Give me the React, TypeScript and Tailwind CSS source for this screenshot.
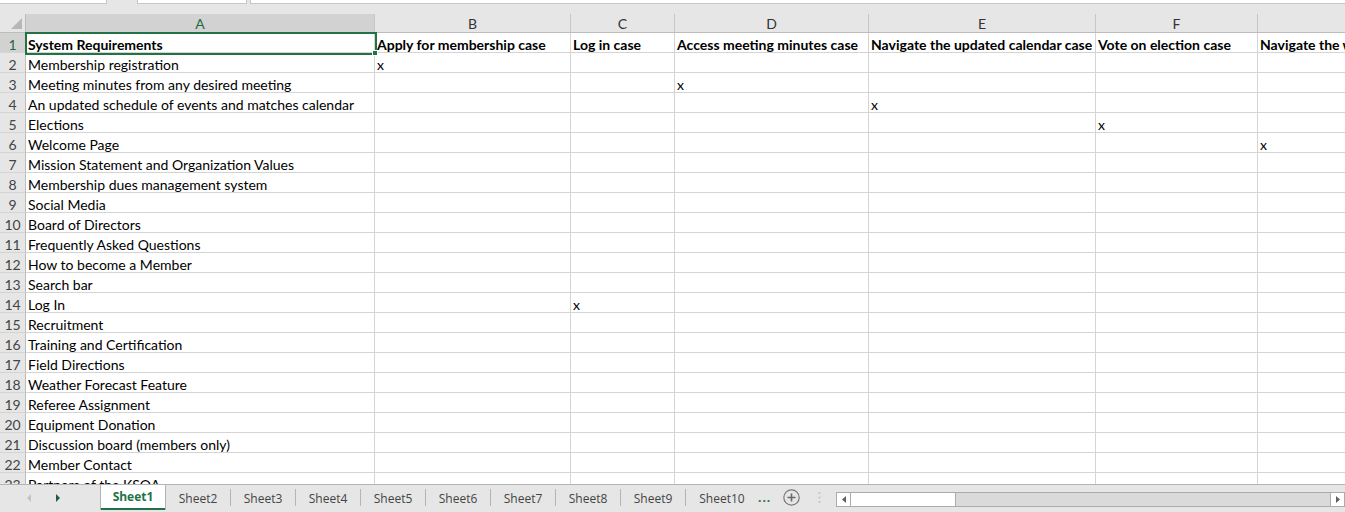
import React from "react";

const cols = [
  { l: "A", w: 349 },
  { l: "B", w: 196 },
  { l: "C", w: 104 },
  { l: "D", w: 194 },
  { l: "E", w: 227 },
  { l: "F", w: 162 },
  { l: "G", w: 120 },
];

const header = [
  "System Requirements",
  "Apply for membership case",
  "Log in case",
  "Access meeting minutes case",
  "Navigate the updated calendar case",
  "Vote on election case",
  "Navigate the welcome page case",
];

const requirements = [
  "Membership registration",
  "Meeting minutes from any desired meeting",
  "An updated schedule of events and matches calendar",
  "Elections",
  "Welcome Page",
  "Mission Statement and Organization Values",
  "Membership dues management system",
  "Social Media",
  "Board of Directors",
  "Frequently Asked Questions",
  "How to become a Member",
  "Search bar",
  "Log In",
  "Recruitment",
  "Training and Certification",
  "Field Directions",
  "Weather Forecast Feature",
  "Referee Assignment",
  "Equipment Donation",
  "Discussion board (members only)",
  "Member Contact",
  "Partners of the KSOA",
];

// which column (index) holds the "x" for a row number
const marks: Record<number, number> = { 2: 1, 3: 3, 4: 4, 5: 5, 6: 6, 14: 2 };

const sheets = ["Sheet2", "Sheet3", "Sheet4", "Sheet5", "Sheet6", "Sheet7", "Sheet8", "Sheet9"];

function Row({ n, cells, bold }: { n: number; cells: string[]; bold?: boolean }) {
  return (
    <div className="flex h-[20px] shrink-0">
      <div
        className={`w-[26px] shrink-0 border-r border-b border-r-[#bcbcbc] border-b-[#d4d4d4] flex items-center justify-center pt-[3px] text-[14px] ${
          n === 1 ? "bg-[#d2d2d2] text-[#1e6b41]" : "bg-[#e6e6e6] text-[#444]"
        }`}
      >
        {n}
      </div>
      {cols.map((c, i) => (
        <div
          key={c.l}
          style={{ width: c.w }}
          className={`shrink-0 bg-white border-r border-b border-[#d4d4d4] pl-[2px] pt-[3px] flex items-center overflow-hidden whitespace-nowrap text-[14px] text-black ${
            bold ? "font-bold" : ""
          }`}
        >
          {cells[i] ?? ""}
        </div>
      ))}
    </div>
  );
}

export default function App() {
  return (
    <div className="relative w-[1345px] h-[512px] overflow-hidden bg-[#e6e6e6] flex flex-col font-['Lato',sans-serif]">
      {/* formula bar remnants */}
      <div className="h-[14px] shrink-0 flex items-start">
        <div className="w-[107px] h-[4px] bg-white border-r border-b border-[#c6c6c6]" />
        <div className="w-[30px]" />
        <div className="w-[110px] h-[4px] bg-white border-x border-b border-[#c6c6c6]" />
        <div className="w-[3px]" />
        <div className="flex-1 h-[4px] bg-white border-l border-b border-[#c6c6c6]" />
      </div>

      {/* column headers */}
      <div className="flex h-[19px] shrink-0">
        <div className="w-[26px] shrink-0 border-r border-b border-[#bcbcbc] flex items-end justify-end pr-[3px] pb-[3px]">
          <svg width="11" height="11" viewBox="0 0 11 11">
            <path d="M0 11 L11 0 L11 11 Z" fill="#b7b7b7" />
          </svg>
        </div>
        {cols.map((c, i) => (
          <div
            key={c.l}
            style={{ width: c.w }}
            className={`shrink-0 border-r border-b border-r-[#c6c6c6] border-b-[#bcbcbc] flex items-center justify-center pt-[1px] text-[14px] ${
              i === 0 ? "bg-[#d2d2d2] text-[#1e6b41]" : "text-[#333]"
            }`}
          >
            {i < 6 ? c.l : ""}
          </div>
        ))}
      </div>

      {/* grid */}
      <div className="h-[451px] shrink-0 overflow-hidden flex flex-col">
        <Row n={1} cells={header} bold />
        {requirements.map((r, i) => {
          const n = i + 2;
          const cells = [r, "", "", "", "", "", ""];
          if (marks[n] !== undefined) cells[marks[n]] = "x";
          return <Row key={n} n={n} cells={cells} />;
        })}
      </div>

      {/* selection */}
      <div className="absolute left-[25px] top-[32px] w-[352px] h-[23px] border-2 border-[#217346] pointer-events-none" />
      <div className="absolute left-[372px] top-[50px] w-[6px] h-[6px] bg-[#217346] border border-white pointer-events-none" />

      {/* sheet tabs */}
      <div className="h-[28px] shrink-0 border-t border-[#b4b4b4] flex items-start text-[12px] font-['Open_Sans',sans-serif]">
        <div className="w-[100px] h-[26px] flex items-center">
          <svg className="ml-[27px]" width="5" height="8" viewBox="0 0 5 8">
            <path d="M4 0 L0 4 L4 8 Z" fill="#c3c3c3" />
          </svg>
          <svg className="ml-[24px]" width="5" height="8" viewBox="0 0 5 8">
            <path d="M0 0 L4 4 L0 8 Z" fill="#1f5c39" />
          </svg>
        </div>
        <div className="w-[66px] h-[25px] bg-white border-x border-[#b4b4b4] flex flex-col">
          <div className="flex-1 flex items-center justify-center pt-[1px] font-bold text-[#217346]">Sheet1</div>
          <div className="h-[2px] bg-[#217346]" />
        </div>
        {sheets.map((s) => (
          <div key={s} className="w-[65px] h-[25px] flex items-center">
            <div className="flex-1 text-center pt-[2px] text-[#444]">{s}</div>
            <div className="w-px h-[17px] bg-[#b4b4b4]" />
          </div>
        ))}
        <div className="w-[72px] h-[25px] pt-[2px] flex items-center justify-center text-[#444]">Sheet10</div>
        <div className="h-[25px] flex items-center text-[#217346] font-bold tracking-[1px]">...</div>
        <div className="h-[25px] flex items-center ml-[12px]">
          <svg width="17" height="17" viewBox="0 0 17 17">
            <circle cx="8.5" cy="8.5" r="7.7" fill="none" stroke="#7a7a7a" strokeWidth="1.2" />
            <path d="M8.5 4.5 V12.5 M4.5 8.5 H12.5" stroke="#6a6a6a" strokeWidth="1.6" />
          </svg>
        </div>
        <div className="h-[25px] flex items-center ml-[18px]">
          <svg width="3" height="11" viewBox="0 0 3 11">
            <rect x="0.5" y="0" width="2" height="2" fill="#c8c8c8" />
            <rect x="0.5" y="4.5" width="2" height="2" fill="#c8c8c8" />
            <rect x="0.5" y="9" width="2" height="2" fill="#c8c8c8" />
          </svg>
        </div>
        {/* horizontal scrollbar */}
        <div className="flex-1 ml-[15px] mt-[7px] h-[15px] flex border border-[#ababab] bg-[#dadada]">
          <div className="w-[14px] bg-white border-r border-[#ababab] flex items-center justify-center">
            <svg width="4" height="7" viewBox="0 0 4 7">
              <path d="M4 0 L0 3.5 L4 7 Z" fill="#606060" />
            </svg>
          </div>
          <div className="w-[105px] bg-white border-r border-[#ababab]" />
          <div className="flex-1" />
          <div className="w-[14px] bg-white border-l border-[#ababab] flex items-center justify-center">
            <svg width="4" height="7" viewBox="0 0 4 7">
              <path d="M0 0 L4 3.5 L0 7 Z" fill="#606060" />
            </svg>
          </div>
        </div>
      </div>
    </div>
  );
}
